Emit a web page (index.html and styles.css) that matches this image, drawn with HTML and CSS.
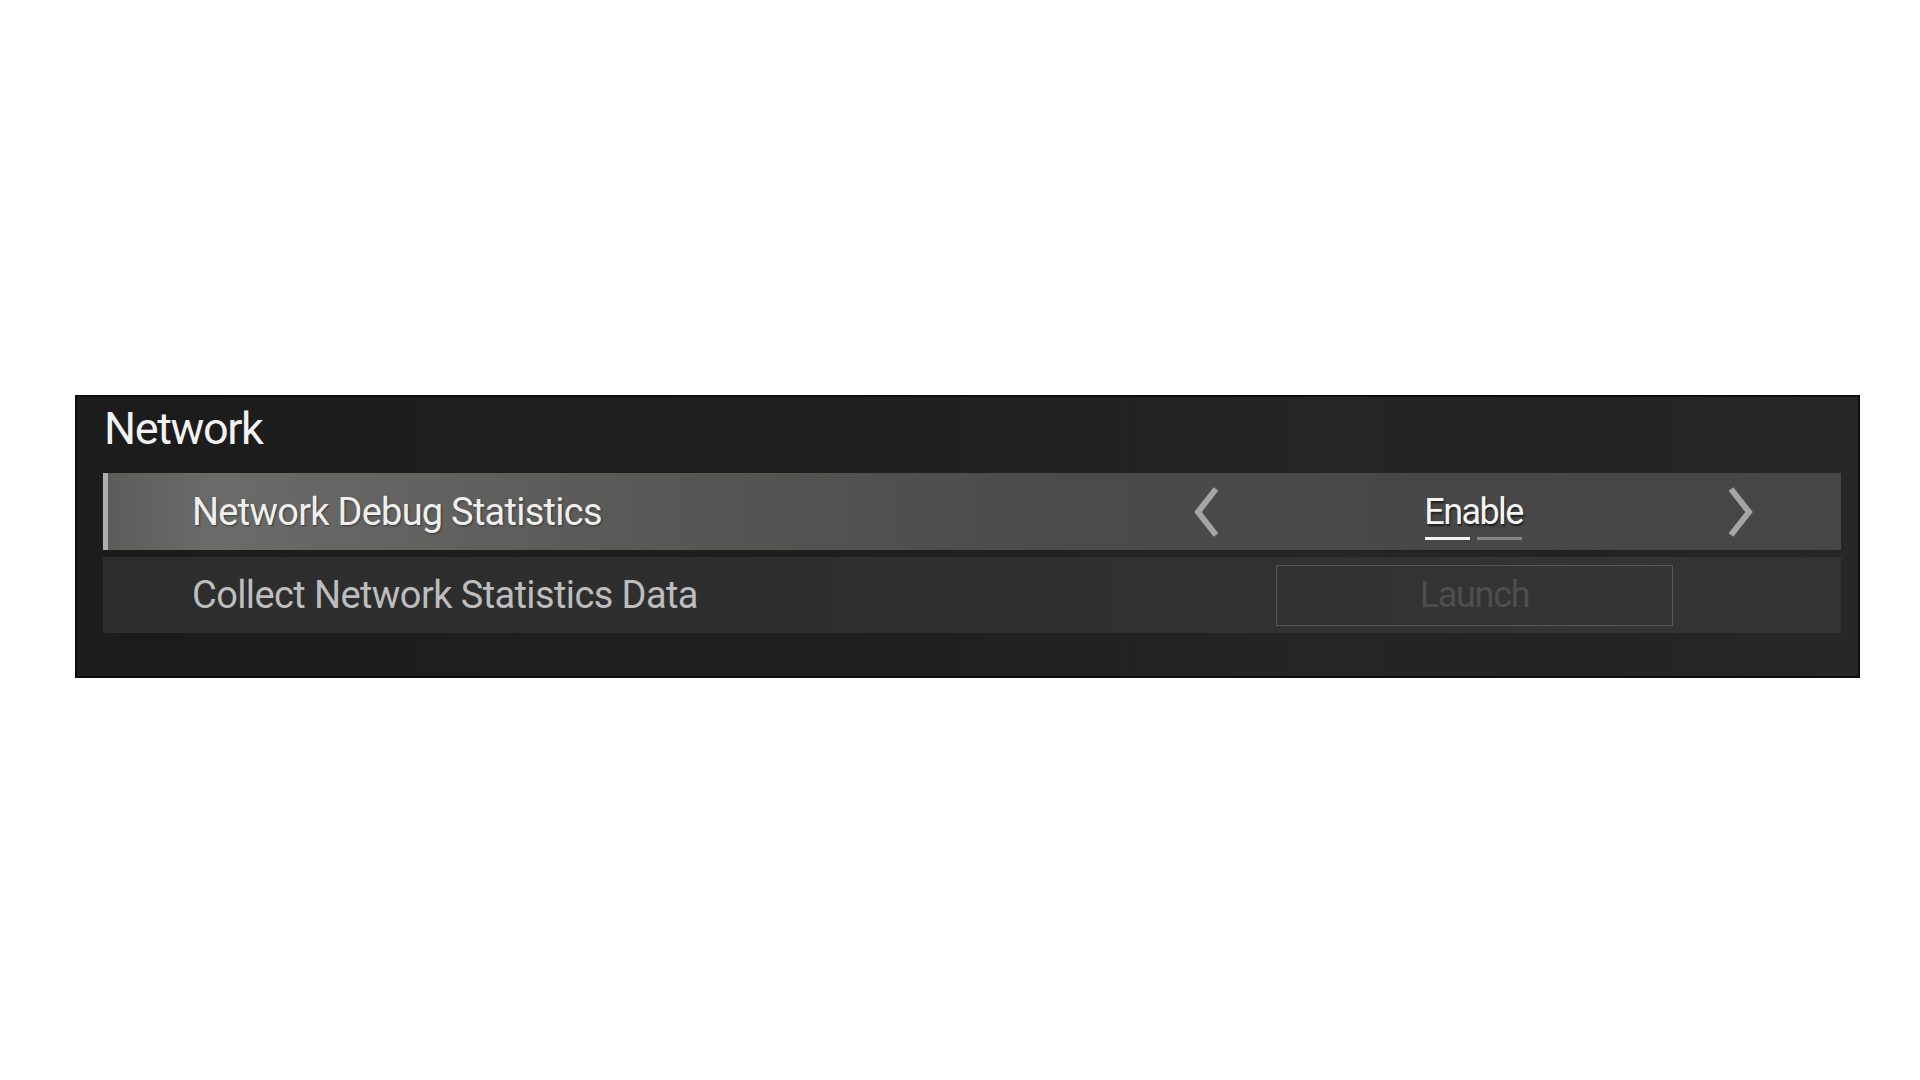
FILE: index.html
```html
<!DOCTYPE html>
<html lang="en">
<head>
<meta charset="utf-8">
<title>Network</title>
<link rel="stylesheet" href="styles.css">
</head>
<body>
<div class="page">
  <section class="panel">
    <h1 class="panel-title">Network</h1>
    <div class="rows">
      <div class="row row-focused">
        <span class="row-label">Network Debug Statistics</span>
        <div class="control">
          <svg class="chevron" viewBox="0 0 30 52" width="30" height="52" aria-hidden="true">
            <path d="M26 3 L8 26 L26 49" />
          </svg>
          <div class="value">
            <span class="value-text">Enable</span>
            <div class="value-dots">
              <span class="dot dot-active"></span>
              <span class="dot"></span>
            </div>
          </div>
          <svg class="chevron" viewBox="0 0 30 52" width="30" height="52" aria-hidden="true">
            <path d="M4 3 L22 26 L4 49" />
          </svg>
        </div>
      </div>
      <div class="row">
        <span class="row-label row-label-dim">Collect Network Statistics Data</span>
        <div class="control control-center">
          <button class="launch" type="button" disabled>Launch</button>
        </div>
      </div>
    </div>
  </section>
</div>
</body>
</html>
```
FILE: styles.css
```css
* {
  box-sizing: border-box;
}

html, body {
  margin: 0;
  padding: 0;
  background: #ffffff;
}

body {
  font-family: Roboto, "Noto Sans", "Liberation Sans", sans-serif;
}

.page {
  padding: 395px 60px 0 75px;
}

.panel {
  width: 1785px;
  border: 2px solid #0d0d0d;
  padding: 9px 17px 43px 26px;
  background:
    linear-gradient(90deg, rgba(255,255,255,0) 0%, rgba(255,255,255,0.015) 45%, rgba(255,255,255,0.04) 70%, rgba(255,255,255,0.03) 85%, rgba(255,255,255,0.05) 100%),
    #1c1c1c;
}

.panel-title {
  margin: 0 0 22px 1px;
  font-size: 45px;
  line-height: 45px;
  font-weight: 400;
  letter-spacing: -1.4px;
  color: #f2f2f2;
}

.rows {
  display: flex;
  flex-direction: column;
  gap: 7px;
}

.row {
  height: 76px;
  display: flex;
  align-items: center;
  justify-content: space-between;
  padding-left: 89px;
  padding-right: 84px;
  background: linear-gradient(90deg, #2d2d2d 0%, #2f2f2f 50%, #343434 85%, #333333 100%);
}

.row-focused {
  height: 77px;
  padding-left: 84px;
  border-left: 5px solid #aeaeac;
  background: linear-gradient(90deg, #5c5c5a 0%, #6b6b69 6%, #626260 18%, #555554 35%, #4b4b4b 55%, #474747 80%, #464646 100%);
}

.row-label {
  font-size: 38px;
  line-height: 38px;
  letter-spacing: -0.75px;
  color: #efefef;
  text-shadow: 1px 1px 2px rgba(0,0,0,0.45);
}

.row-label-dim {
  letter-spacing: -0.6px;
  color: #bdbdbd;
  text-shadow: none;
}

.control {
  width: 567px;
  display: flex;
  align-items: center;
  justify-content: space-between;
}

.control-center {
  justify-content: center;
}

.chevron {
  display: block;
}

.chevron path {
  fill: none;
  stroke: #a5a5a5;
  stroke-width: 6;
  stroke-linejoin: miter;
}

.value {
  display: flex;
  flex-direction: column;
  align-items: center;
  padding-top: 10px;
  gap: 7px;
}

.value-text {
  font-size: 36px;
  line-height: 36px;
  letter-spacing: -1.6px;
  color: #f4f4f4;
  text-shadow: 1px 2px 2px rgba(0,0,0,0.6);
}

.value-dots {
  display: flex;
  gap: 7px;
}

.dot {
  width: 45px;
  height: 3px;
  background: #858585;
}

.dot-active {
  background: #f2f2f2;
}

.launch {
  width: 397px;
  height: 61px;
  margin-left: 2px;
  border: 1px solid #555555;
  background: transparent;
  font-family: Roboto, "Noto Sans", "Liberation Sans", sans-serif;
  font-size: 36px;
  line-height: 36px;
  letter-spacing: -1.3px;
  color: #4e4e4e;
  padding: 0;
}
```
